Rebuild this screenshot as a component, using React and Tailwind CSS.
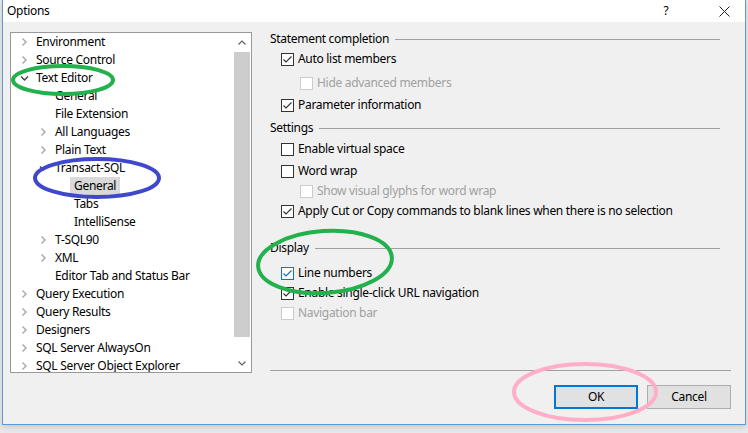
import React from "react";

const tree = [
  { t: "Environment", l: 0, c: "closed" },
  { t: "Source Control", l: 0, c: "closed" },
  { t: "Text Editor", l: 0, c: "open" },
  { t: "General", l: 1 },
  { t: "File Extension", l: 1 },
  { t: "All Languages", l: 1, c: "closed" },
  { t: "Plain Text", l: 1, c: "closed" },
  { t: "Transact-SQL", l: 1, c: "open" },
  { t: "General", l: 2, sel: true },
  { t: "Tabs", l: 2 },
  { t: "IntelliSense", l: 2 },
  { t: "T-SQL90", l: 1, c: "closed" },
  { t: "XML", l: 1, c: "closed" },
  { t: "Editor Tab and Status Bar", l: 1 },
  { t: "Query Execution", l: 0, c: "closed" },
  { t: "Query Results", l: 0, c: "closed" },
  { t: "Designers", l: 0, c: "closed" },
  { t: "SQL Server AlwaysOn", l: 0, c: "closed" },
  { t: "SQL Server Object Explorer", l: 0, c: "closed" },
];

const indent = ["pl-[9px]", "pl-[28px]", "pl-[47px]"];

function Chevron({ state }) {
  if (state === "open")
    return (
      <svg width="9" height="7" viewBox="0 0 9 7">
        <path d="M1 1.5 L4.5 5 L8 1.5" fill="none" stroke="#404040" strokeWidth="1.4" />
      </svg>
    );
  if (state === "closed")
    return (
      <svg width="7" height="10" viewBox="0 0 7 10" className="ml-[1px]">
        <path d="M1.5 1.5 L5 5 L1.5 8.5" fill="none" stroke="#a6a6a6" strokeWidth="1.4" />
      </svg>
    );
  return null;
}

function TreeRow({ item }) {
  return (
    <div className={`h-[18px] flex items-center whitespace-nowrap ${indent[item.l]}`}>
      <div className="w-[16px] flex items-center">
        <Chevron state={item.c} />
      </div>
      <span className={item.sel ? "-ml-[4px] px-[4px] bg-[#d9d9d9] leading-[18px]" : ""}>{item.t}</span>
    </div>
  );
}

function Box({ checked, disabled, hover }) {
  const border = disabled ? "border-[#cccccc]" : hover ? "border-[#0078d7]" : "border-[#333333]";
  return (
    <div className={`w-[13px] h-[13px] shrink-0 border bg-white flex items-center justify-center ${border}`}>
      {checked && (
        <svg width="11" height="11" viewBox="0 0 11 11">
          <path d="M1.5 5.5 L4 8 L9.5 2.5" fill="none" stroke={hover ? "#1c6fb8" : "#333333"} strokeWidth="1.2" />
        </svg>
      )}
    </div>
  );
}

function Check({ label, checked, disabled, hover, sub, mt }) {
  return (
    <div className={`h-[18px] flex items-center gap-[4px] whitespace-nowrap ${sub ? "pl-[30px]" : "pl-[11px]"} ${mt}`}>
      <Box checked={checked} disabled={disabled} hover={hover} />
      <span className={disabled ? "text-[#a0a0a0]" : "text-black"}>{label}</span>
    </div>
  );
}

function Group({ title, mt }) {
  return (
    <div className={`h-[18px] flex items-center gap-[6px] mr-[11px] ${mt}`}>
      <span className="whitespace-nowrap">{title}</span>
      <div className="flex-1 h-px bg-[#a0a0a0]" />
    </div>
  );
}

export default function App() {
  return (
    <div className="relative w-[748px] h-[433px] overflow-hidden bg-[#e9e9e9] font-['Segoe_UI','Noto_Sans',sans-serif] text-[12px] tracking-[-0.3px] text-black">
      <div className="ml-[2px] w-[744px] h-[425px] border-l border-r border-b border-[#5b9bd5] bg-[#f0f0f0] flex flex-col shadow-[0_2px_6px_rgba(0,0,0,0.15)]">
        {/* title bar */}
        <div className="h-[22px] bg-white flex items-center">
          <span className="pl-[4px] text-[12px]">Options</span>
          <div className="flex-1" />
          <span className="w-[20px] text-center text-[12px] mr-[27px]">?</span>
          <div className="w-[42px] flex justify-center">
            <svg width="11" height="11" viewBox="0 0 11 11">
              <path d="M0.5 0.5 L10.5 10.5 M10.5 0.5 L0.5 10.5" stroke="#222" strokeWidth="1" />
            </svg>
          </div>
        </div>

        <div className="flex flex-1">
          {/* tree */}
          <div className="pl-[7px] pt-[10px]">
            <div className="w-[242px] h-[341px] border border-[#999999] bg-white flex">
              <div className="flex-1 overflow-hidden">
                {tree.map((it, i) => (
                  <TreeRow key={i} item={it} />
                ))}
              </div>
              <div className="w-[16px] mr-px flex flex-col">
                <div className="h-[19px] flex items-center justify-center">
                  <svg width="8" height="5" viewBox="0 0 8 5">
                    <path d="M0.5 4.5 L4 1 L7.5 4.5" fill="none" stroke="#606060" strokeWidth="1.2" />
                  </svg>
                </div>
                <div className="h-[285px] bg-[#cdcdcd]" />
                <div className="flex-1 flex items-end justify-center pb-[6px]">
                  <svg width="8" height="5" viewBox="0 0 8 5">
                    <path d="M0.5 0.5 L4 4 L7.5 0.5" fill="none" stroke="#606060" strokeWidth="1.2" />
                  </svg>
                </div>
              </div>
            </div>
          </div>

          {/* options */}
          <div className="ml-[18px] w-[461px] pt-[8px] flex flex-col">
            <Group title="Statement completion" />
            <Check label="Auto list members" checked mt="mt-[2px]" />
            <Check label="Hide advanced members" disabled sub mt="mt-[6px]" />
            <Check label="Parameter information" checked mt="mt-[4px]" />
            <Group title="Settings" mt="mt-[5px]" />
            <Check label="Enable virtual space" mt="mt-[3px]" />
            <Check label="Word wrap" mt="mt-[4px]" />
            <Check label="Show visual glyphs for word wrap" disabled sub mt="mt-[2px]" />
            <Check label="Apply Cut or Copy commands to blank lines when there is no selection" checked mt="mt-[2px]" />
            <Group title="Display" mt="mt-[19px]" />
            <Check label="Line numbers" checked hover mt="mt-[7px]" />
            <Check label="Enable single-click URL navigation" checked mt="mt-[2px]" />
            <Check label="Navigation bar" disabled mt="mt-[2px]" />
            <div className="mt-[48px] h-px bg-[#a0a0a0]" />
            <div className="mt-[14px] flex justify-end gap-[9px]">
              <button className="w-[84px] h-[24px] bg-[#e1e1e1] border-2 border-[#0078d7]">OK</button>
              <button className="w-[84px] h-[24px] bg-[#e1e1e1] border border-[#adadad]">Cancel</button>
            </div>
          </div>
        </div>
      </div>

      {/* paint annotations */}
      <svg className="absolute left-0 top-0 pointer-events-none" width="748" height="433" viewBox="0 0 748 433">
        <ellipse cx="63" cy="80" rx="50" ry="14" fill="none" stroke="#22b14c" strokeWidth="4" />
        <ellipse cx="97" cy="178" rx="62" ry="19" fill="none" stroke="#3f48cc" strokeWidth="4" />
        <ellipse cx="325" cy="262" rx="67" ry="31" fill="none" stroke="#22b14c" strokeWidth="4" transform="rotate(-4 325 262)" />
        <ellipse cx="585" cy="392" rx="71" ry="28" fill="none" stroke="#ffaec9" strokeWidth="4" />
      </svg>
    </div>
  );
}
